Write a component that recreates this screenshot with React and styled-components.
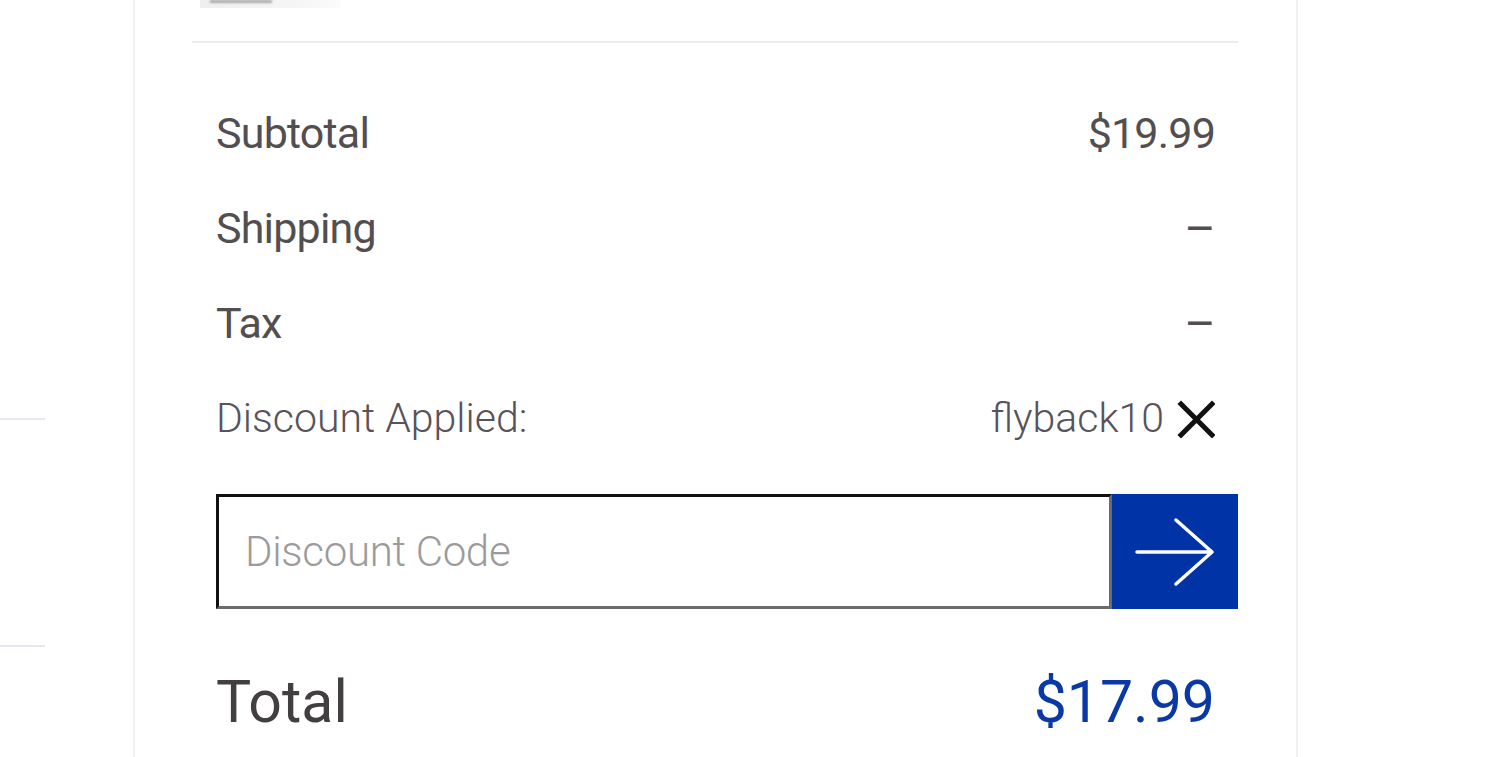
import React from 'react';
import styled, { createGlobalStyle } from 'styled-components';

const GlobalStyle = createGlobalStyle`
    html, body {
        margin: 0;
        padding: 0;
        background: #ffffff;
        overflow: hidden;
    }
    body {
        font-family: Roboto, "Liberation Sans", sans-serif;
    }
`;

const Page = styled.div`
    display: flex;
    height: 757px;
`;

const SideRail = styled.div`
    width: 133px;
    flex-shrink: 0;
    display: flex;
    flex-direction: column;
`;

const RailLine = styled.div`
    width: 45px;
    height: 2px;
    background: #e4e9ef;
    margin-top: ${props => props.offset}px;
`;

const Panel = styled.div`
    width: 1165px;
    box-sizing: border-box;
    border-left: 2px solid #f1f1f1;
    border-right: 2px solid #f1f1f1;
    padding: 0 58px 0 57px;
`;

const Thumb = styled.div`
    margin-left: 8px;
    width: 140px;
    height: 8px;
    background: linear-gradient(90deg, #efefef, #f6f6f6 70%, #fbfbfb);
    display: flex;
    align-items: flex-start;
    padding-left: 10px;
    box-sizing: border-box;
`;

const ThumbText = styled.div`
    width: 62px;
    height: 3px;
    background: #a9a9a9;
    filter: blur(0.8px);
`;

const Divider = styled.div`
    margin-top: 33px;
    height: 2px;
    background: #ececec;
`;

const Summary = styled.div`
    padding-left: 24px;
    margin-top: 43px;
`;

const Row = styled.div`
    display: flex;
    justify-content: space-between;
    align-items: center;
    height: 95px;
    line-height: 95px;
    padding-right: 23px;
    font-size: ${props => (props.light ? 41 : 43)}px;
    font-weight: ${props => (props.light ? 300 : 400)};
    letter-spacing: ${props => (props.light ? '0px' : '-0.8px')};
    color: ${props => (props.light ? '#58535a' : '#534e50')};
`;

const Dash = styled.span`
    font-size: 48px;
    color: #534e50;
`;

const Code = styled.span`
    display: flex;
    align-items: center;
    gap: 13px;
`;

const RemoveButton = styled.button`
    border: none;
    background: none;
    padding: 0;
    width: 38px;
    height: 38px;
    display: flex;
    cursor: pointer;
`;

const CodeForm = styled.form`
    display: flex;
    margin-top: 28px;
    height: 115px;
`;

const CodeInput = styled.input`
    flex: 1;
    box-sizing: border-box;
    height: 115px;
    border-style: solid;
    border-width: 3px;
    border-color: #111111 #6b6b6b #6b6b6b #111111;
    padding: 0 26px;
    font-family: Roboto, "Liberation Sans", sans-serif;
    font-size: 42px;
    font-weight: 300;
    letter-spacing: -0.3px;
    outline: none;

    &::placeholder {
        color: #9b9b9b;
    }
`;

const ApplyButton = styled.button`
    width: 126px;
    height: 115px;
    border: none;
    background: #0033a5;
    display: flex;
    align-items: center;
    justify-content: center;
    padding: 0;
    cursor: pointer;
`;

const TotalRow = styled.div`
    display: flex;
    justify-content: space-between;
    align-items: center;
    margin-top: 53px;
    height: 80px;
    line-height: 80px;
    padding-right: 23px;
    font-size: 59px;
    color: #433e40;
`;

const TotalAmount = styled.span`
    color: #0a38a6;
`;

const CloseIcon = () => (
    <svg width="38" height="38" viewBox="0 0 38 38">
        <path d="M4 4 L35 35 M35 4 L4 35" stroke="#111" strokeWidth="5" strokeLinecap="square" />
    </svg>
);

const ArrowIcon = () => (
    <svg width="82" height="70" viewBox="0 0 82 70">
        <path
            d="M3 35 H78 M42 3 L78 35 L42 67"
            stroke="#ffffff"
            strokeWidth="3.5"
            fill="none"
            strokeLinecap="round"
            strokeLinejoin="round"
        />
    </svg>
);

const rows = [
    { label: 'Subtotal', value: '$19.99' },
    { label: 'Shipping', value: null },
    { label: 'Tax', value: null }
];

export default function App() {
    return (
        <>
            <GlobalStyle />
            <Page>
                <SideRail>
                    <RailLine offset={418} />
                    <RailLine offset={225} />
                </SideRail>
                <Panel>
                    <Thumb>
                        <ThumbText />
                    </Thumb>
                    <Divider />
                    <Summary>
                        {rows.map(row => (
                            <Row key={row.label}>
                                <span>{row.label}</span>
                                {row.value ? <span>{row.value}</span> : <Dash>–</Dash>}
                            </Row>
                        ))}
                        <Row light>
                            <span>Discount Applied:</span>
                            <Code>
                                flyback10
                                <RemoveButton type="button" aria-label="Remove discount">
                                    <CloseIcon />
                                </RemoveButton>
                            </Code>
                        </Row>
                        <CodeForm onSubmit={e => e.preventDefault()}>
                            <CodeInput placeholder="Discount Code" />
                            <ApplyButton type="submit" aria-label="Apply">
                                <ArrowIcon />
                            </ApplyButton>
                        </CodeForm>
                        <TotalRow>
                            <span>Total</span>
                            <TotalAmount>$17.99</TotalAmount>
                        </TotalRow>
                    </Summary>
                </Panel>
            </Page>
        </>
    );
}
